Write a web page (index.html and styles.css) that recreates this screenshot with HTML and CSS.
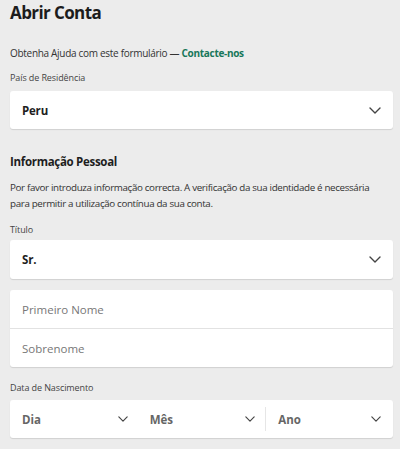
FILE: index.html
```html
<!DOCTYPE html>
<html lang="pt">
<head>
<meta charset="utf-8">
<link rel="stylesheet" href="styles.css">
</head>
<body>
<main class="page">
  <h1 class="title">Abrir Conta</h1>
  <p class="help">Obtenha Ajuda com este formulário — <a class="link" href="#">Contacte-nos</a></p>

  <div class="label label-country">País de Residência</div>
  <div class="card select">
    <span class="value">Peru</span>
    <svg class="chev" viewBox="0 0 12 7" width="12" height="7"><path d="M1 1l5 5 5-5"/></svg>
  </div>

  <h2 class="section">Informação Pessoal</h2>
  <p class="para">Por favor introduza informação correcta. A verificação da sua identidade é necessária<br>para permitir a utilização contínua da sua conta.</p>

  <div class="label label-title">Título</div>
  <div class="card select">
    <span class="value">Sr.</span>
    <svg class="chev" viewBox="0 0 12 7" width="12" height="7"><path d="M1 1l5 5 5-5"/></svg>
  </div>

  <div class="card names">
    <div class="field">Primeiro Nome</div>
    <div class="field">Sobrenome</div>
  </div>

  <div class="label label-dob">Data de Nascimento</div>
  <div class="card dob">
    <div class="dcol">
      <span class="dval">Dia</span>
      <svg class="chev" viewBox="0 0 12 7" width="12" height="7"><path d="M1 1l5 5 5-5"/></svg>
    </div>
    <div class="dcol">
      <span class="dval">Mês</span>
      <svg class="chev" viewBox="0 0 12 7" width="12" height="7"><path d="M1 1l5 5 5-5"/></svg>
    </div>
    <div class="dcol sep">
      <span class="dval">Ano</span>
      <svg class="chev" viewBox="0 0 12 7" width="12" height="7"><path d="M1 1l5 5 5-5"/></svg>
    </div>
  </div>
</main>
</body>
</html>
```

FILE: styles.css
```css
html, body {
  margin: 0;
  padding: 0;
  background: #ececec;
}
body {
  font-family: "Open Sans", "Noto Sans", "Liberation Sans", sans-serif;
  color: #222;
  height: 449px;
  overflow: hidden;
}
.page {
  padding: 1px 7px 0 10px;
  display: flex;
  flex-direction: column;
}
.title {
  margin: 0;
  font-size: 17px;
  line-height: 24px;
  font-weight: 700;
  color: #1c1c1c;
  letter-spacing: -0.6px;
}
.help {
  margin: 20px 0 0;
  font-size: 10px;
  line-height: 16px;
  color: #333;
  letter-spacing: -0.3px;
}
.link {
  color: #17775a;
  font-weight: 700;
  text-decoration: none;
}
.label {
  font-size: 9px;
  line-height: 14px;
  color: #444;
  letter-spacing: -0.1px;
}
.label-country { margin-top: 10px; }
.label-title { margin-top: 11px; }
.label-dob { margin-top: 14px; }
.card {
  background: #fff;
  border-radius: 3px;
  box-shadow: 0 1px 1px rgba(0, 0, 0, 0.12);
}
.select {
  margin-top: 6px;
  height: 38px;
  display: flex;
  align-items: center;
  justify-content: space-between;
  padding: 0 12px;
}
.label-title + .select { margin-top: 3px; height: 39px; }
.value {
  font-size: 11.5px;
  font-weight: 700;
  color: #1e1e1e;
  letter-spacing: -0.2px;
}
.chev {
  fill: none;
  stroke: #444;
  stroke-width: 1.4;
  stroke-linecap: round;
  stroke-linejoin: round;
  display: block;
}
.section {
  margin: 24px 0 0;
  font-size: 11.5px;
  line-height: 18px;
  font-weight: 700;
  color: #1e1e1e;
  letter-spacing: -0.3px;
}
.para {
  margin: 9px 0 0;
  font-size: 9.8px;
  line-height: 16px;
  color: #333;
  letter-spacing: -0.35px;
  white-space: nowrap;
}
.names {
  margin-top: 11px;
  display: flex;
  flex-direction: column;
}
.field {
  height: 38px;
  display: flex;
  align-items: center;
  padding: 0 12px;
  font-size: 11.5px;
  color: #777;
}
.field + .field {
  border-top: 1px solid #e2e2e2;
}
.dob {
  margin-top: 5px;
  height: 38px;
  display: grid;
  grid-template-columns: 1fr 1fr 1fr;
  align-items: center;
}
.dcol {
  display: flex;
  align-items: center;
  justify-content: space-between;
  padding: 0 10px 0 12px;
  height: 24px;
}
.dcol.sep {
  border-left: 1px solid #e6e6e6;
  padding-right: 12px;
}
.dval {
  font-size: 11.5px;
  font-weight: 700;
  color: #666;
}
.dcol .chev { width: 10px; height: 6px; }
```
